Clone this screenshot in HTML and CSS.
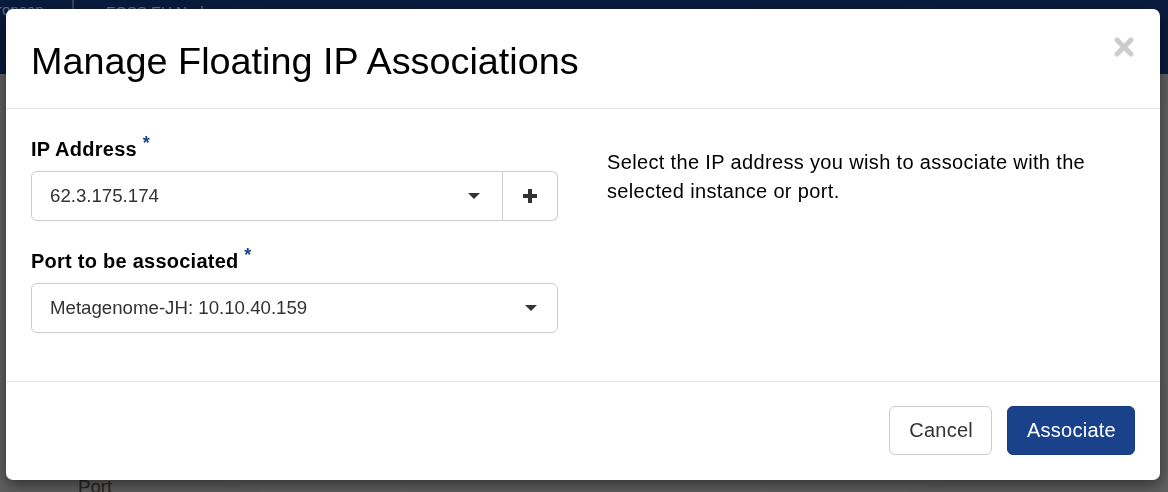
FILE: index.html
```html
<!DOCTYPE html>
<html lang="en">
<head>
    <meta charset="UTF-8">
    <meta name="viewport" content="width=device-width, initial-scale=1.0">
    <title>Manage Floating IP Associations</title>
    <link rel="stylesheet" href="styles.css">
</head>
<body>
    <div class="page">
        <div class="navbar">
            <span class="brand">ropean</span>
            <span class="nav-sep"></span>
            <span class="nav-region">FOSS EU Node</span>
        </div>
        <div class="page-body">
            <p class="page-foot">Port</p>
        </div>
    </div>

    <div class="modal-backdrop"></div>

    <div class="modal">
        <div class="modal-header">
            <h3 class="modal-title">Manage Floating IP Associations</h3>
            <button class="close" type="button" aria-label="Close">
                <svg width="20" height="20" viewBox="0 0 20 20">
                    <path d="M3 3 L17 17 M17 3 L3 17" stroke="#cccccc" stroke-width="5" stroke-linecap="round"/>
                </svg>
            </button>
        </div>

        <div class="modal-body">
            <div class="col-left">
                <div class="form-group">
                    <label>IP Address <span class="req">*</span></label>
                    <div class="input-group">
                        <div class="select">
                            <span>62.3.175.174</span>
                            <span class="caret"></span>
                        </div>
                        <span class="addon">
                            <svg width="16" height="16" viewBox="0 0 16 16">
                                <path d="M8 1 V15 M1 8 H15" stroke="#333" stroke-width="4"/>
                            </svg>
                        </span>
                    </div>
                </div>
                <div class="form-group">
                    <label>Port to be associated <span class="req">*</span></label>
                    <div class="select">
                        <span>Metagenome-JH: 10.10.40.159</span>
                        <span class="caret"></span>
                    </div>
                </div>
            </div>
            <div class="col-right">
                <p>Select the IP address you wish to associate with the selected instance or port.</p>
            </div>
        </div>

        <div class="modal-footer">
            <button class="btn btn-default" type="button">Cancel</button>
            <button class="btn btn-primary" type="button">Associate</button>
        </div>
    </div>
</body>
</html>
```

FILE: styles.css
```css
* {
    box-sizing: border-box;
}
body {
    margin: 0;
    font-family: "Liberation Sans", Arial, sans-serif;
    font-size: 18.67px;
    color: #333;
    overflow: hidden;
}
.page {
    height: 492px;
    background-color: #6b6b6b;
}
.navbar {
    height: 74px;
    background-color: #0a1e44;
    display: flex;
    align-items: flex-start;
    font-size: 15px;
    color: #6f7c93;
}
.brand {
    margin-top: 1px;
    width: 75px;
    margin-left: -3px;
}
.nav-sep {
    width: 2px;
    height: 30px;
    background-color: #3a4a66;
}
.nav-region {
    margin-top: 3px;
    margin-left: 32px;
}
.page-body {
    height: 418px;
    position: relative;
}
.page-foot {
    position: absolute;
    left: 78px;
    top: 402px;
    margin: 0;
    color: #2a2a2a;
}
.modal-backdrop {
    position: fixed;
    inset: 0;
    background: radial-gradient(ellipse at center, rgba(0,0,0,0.05), rgba(0,0,0,0.1));
}
.modal {
    position: fixed;
    left: 6px;
    top: 9px;
    width: 1154px;
    background-color: #fff;
    border-radius: 7px;
    box-shadow: 0 5px 15px rgba(0, 0, 0, 0.5);
}
.modal-header {
    height: 100px;
    padding: 0 25px;
    border-bottom: 1px solid #e5e5e5;
    display: flex;
    justify-content: space-between;
    align-items: flex-start;
}
.modal-title {
    margin: 32px 0 0;
    font-size: 37.8px;
    font-weight: normal;
    color: #000;
    line-height: 1.1;
}
.close {
    margin-top: 28px;
    margin-right: 1px;
    padding: 0;
    border: none;
    background: none;
    cursor: pointer;
}
.modal-body {
    height: 273px;
    padding: 0 25px;
    display: flex;
    border-bottom: 1px solid #e5e5e5;
}
.col-left {
    width: 552px;
    padding-right: 25px;
    padding-top: 27px;
}
.col-right {
    flex: 1;
    padding-left: 24px;
    padding-top: 39px;
}
.col-right p {
    margin: 0;
    color: #000;
    font-size: 20px;
    line-height: 29px;
    letter-spacing: 0.35px;
}
.form-group {
    margin-bottom: 27px;
}
label {
    display: block;
    font-weight: bold;
    color: #000;
    margin-bottom: 9px;
    line-height: 26px;
    font-size: 20px;
    letter-spacing: 0.25px;
}
.req {
    color: #1a428a;
    font-size: 18px;
    line-height: 0;
    vertical-align: 7px;
}
.input-group {
    display: flex;
}
.select {
    height: 50px;
    flex: 1;
    border: 1px solid #ccc;
    border-radius: 6px;
    padding: 0 20px 0 18px;
    display: flex;
    justify-content: space-between;
    align-items: center;
    color: #333;
}
.input-group .select {
    border-radius: 6px 0 0 6px;
    padding-right: 22px;
}
.caret {
    width: 0;
    height: 0;
    border-left: 6px solid transparent;
    border-right: 6px solid transparent;
    border-top: 6px solid #333;
}
.addon {
    width: 55px;
    height: 50px;
    border: 1px solid #ccc;
    border-left: none;
    border-radius: 0 6px 6px 0;
    display: flex;
    align-items: center;
    justify-content: center;
}
.modal-footer {
    height: 98px;
    padding: 24px 25px 0;
    display: flex;
    justify-content: flex-end;
    align-items: flex-start;
    gap: 15px;
}
.btn {
    height: 49px;
    padding: 0 18px 0 19px;
    font-family: inherit;
    font-size: 20px;
    letter-spacing: 0.25px;
    border-radius: 6px;
    cursor: pointer;
}
.btn-default {
    background-color: #fff;
    color: #333;
    border: 1px solid #ccc;
}
.btn-primary {
    background-color: #1a428a;
    color: #fff;
    border: 1px solid #173b7c;
}
```
